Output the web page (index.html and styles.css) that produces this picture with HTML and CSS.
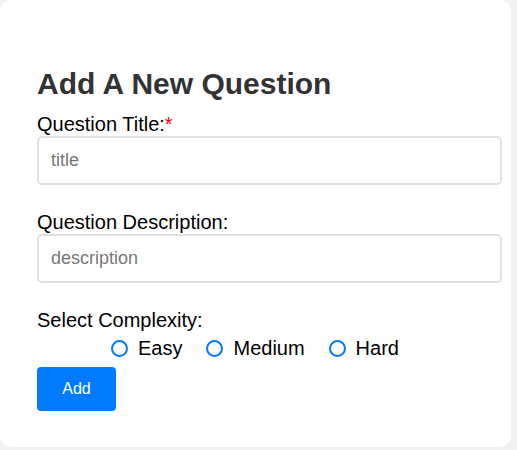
FILE: index.html
```html
<!DOCTYPE html>
<html>
<head>
<meta charset="utf-8">
<link rel="stylesheet" href="styles.css">
</head>
<body>
<div class="card">
  <h1 class="title">Add A New Question</h1>
  <form class="form">
    <label class="label" for="qt">Question Title:<span class="req">*</span></label>
    <input class="field" id="qt" type="text" placeholder="title">
    <label class="label" for="qd">Question Description:</label>
    <input class="field" id="qd" type="text" placeholder="description">
    <div class="label">Select Complexity:</div>
    <div class="radios">
      <label class="opt"><input class="radio" type="radio" name="c"><span>Easy</span></label>
      <label class="opt"><input class="radio" type="radio" name="c"><span>Medium</span></label>
      <label class="opt"><input class="radio" type="radio" name="c"><span>Hard</span></label>
    </div>
    <button class="btn" type="button">Add</button>
  </form>
</div>
</body>
</html>
```

FILE: styles.css
```css
html, body {
  margin: 0;
  padding: 0;
}
body {
  background: #f2f2f2;
  font-family: "Liberation Sans", Arial, sans-serif;
  width: 517px;
  height: 450px;
  overflow: hidden;
}
.card {
  box-sizing: border-box;
  width: 511px;
  height: 447px;
  background: #fff;
  border-radius: 10px;
  padding: 66px 9px 0 37px;
  box-shadow: 0 0 3px rgba(0,0,0,0.04);
}
.title {
  margin: 0 0 12px;
  font-size: 30px;
  line-height: 35px;
  font-weight: bold;
  color: #333;
}
.form {
  display: flex;
  flex-direction: column;
  align-items: flex-start;
}
.label {
  display: block;
  font-size: 20px;
  line-height: 23px;
  color: #000;
}
.req {
  color: #f00;
}
.field {
  box-sizing: border-box;
  width: 465px;
  height: 49px;
  margin: 0 0 26px;
  padding: 0 12px;
  border: 2px solid #e0e0e0;
  border-radius: 5px;
  font-family: "Liberation Sans", Arial, sans-serif;
  font-size: 18px;
  color: #333;
  outline: none;
}
.field::placeholder {
  color: #777;
}
.radios {
  display: flex;
  gap: 24px;
  margin: 5px 0 0 74px;
  height: 23px;
  align-items: center;
}
.opt {
  display: flex;
  align-items: center;
  gap: 10px;
  font-size: 20px;
  line-height: 23px;
  color: #000;
}
.radio {
  appearance: none;
  -webkit-appearance: none;
  box-sizing: border-box;
  width: 17px;
  height: 17px;
  margin: 0;
  border: 2.5px solid #007bff;
  border-radius: 50%;
  background: #fff;
}
.btn {
  margin-top: 7px;
  width: 79px;
  height: 44px;
  border: none;
  border-radius: 4px;
  background: #007bff;
  color: #fff;
  font-family: "Liberation Sans", Arial, sans-serif;
  font-size: 16px;
  padding: 0;
}
```
